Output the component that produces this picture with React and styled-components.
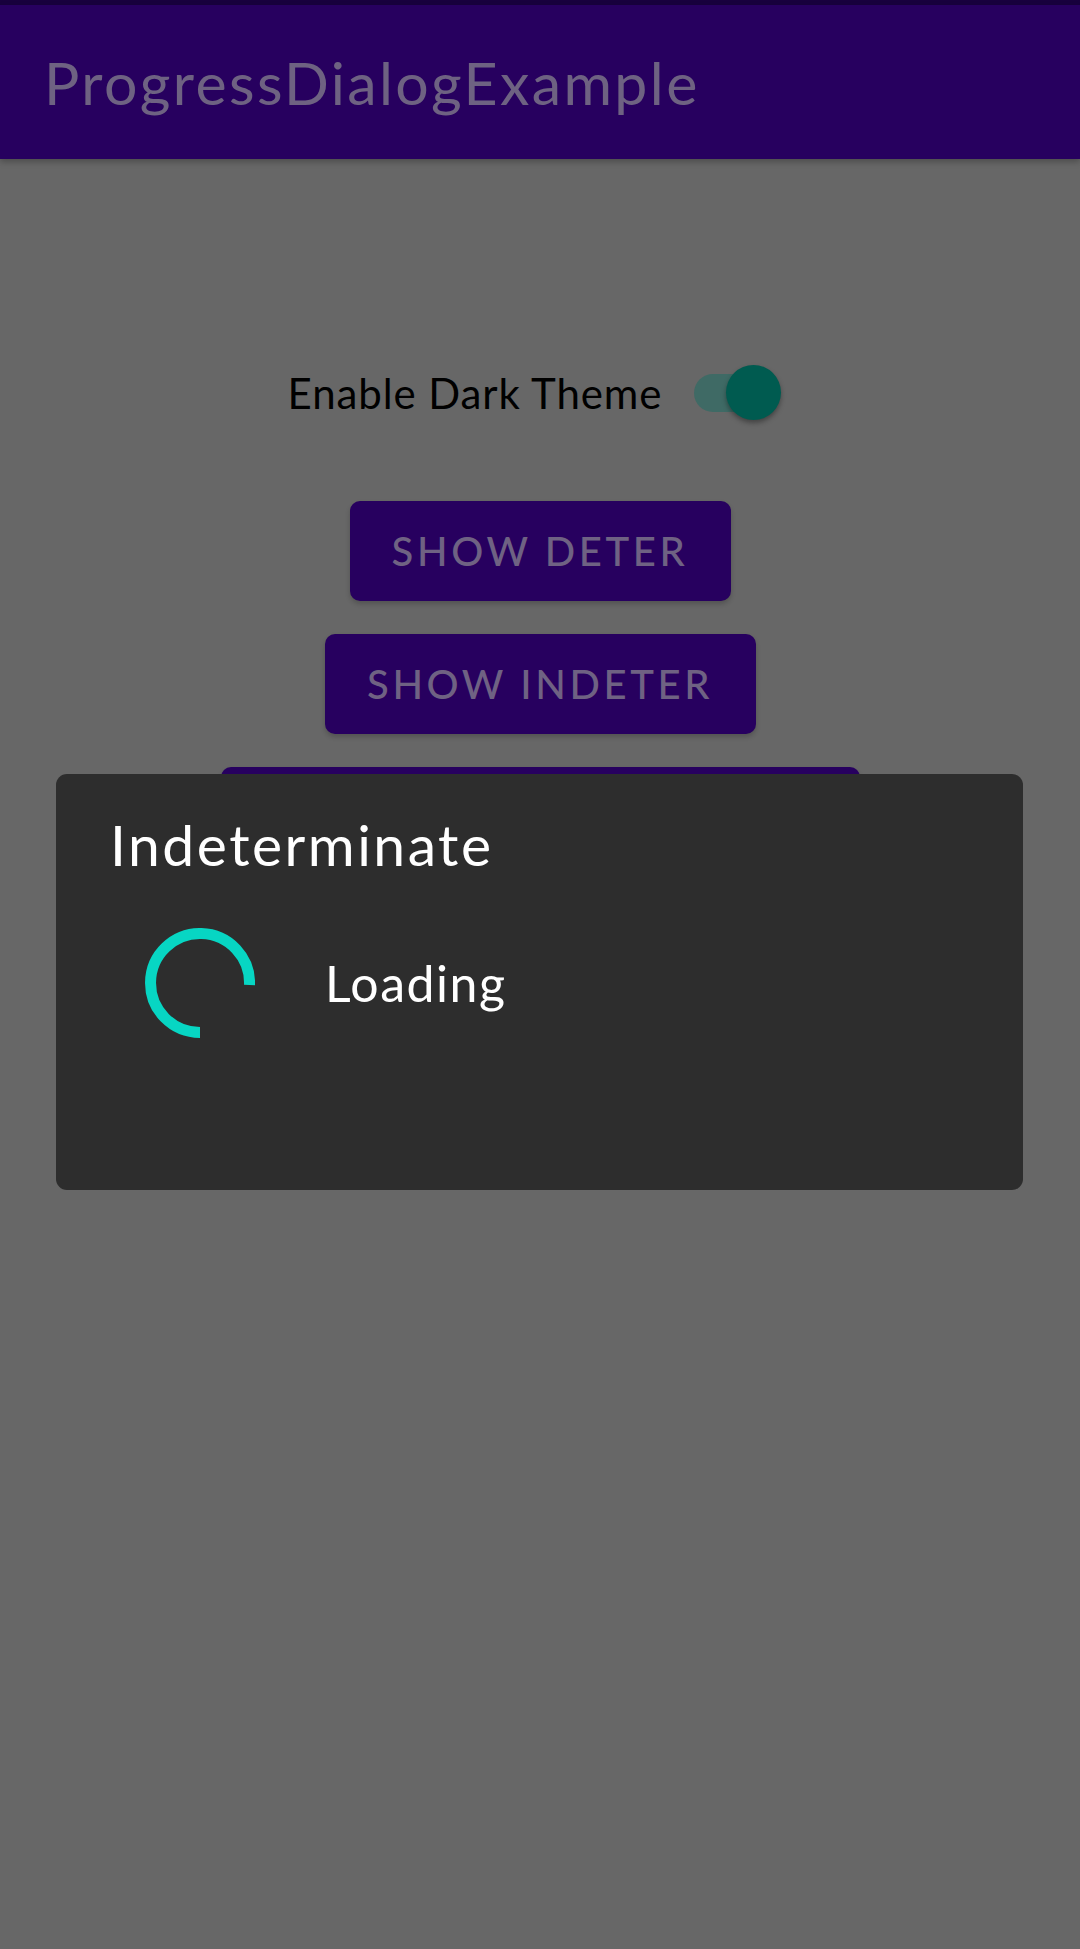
import React from 'react';
import styled, { createGlobalStyle } from 'styled-components';

const GlobalStyle = createGlobalStyle`
  html, body {
    margin: 0;
    padding: 0;
    background: #676767;
    font-family: Lato, "Open Sans", sans-serif;
  }
`;

const Screen = styled.div`
  position: relative;
  width: 1080px;
  min-height: 1949px;
  background: #676767;
  overflow: hidden;
`;

const StatusStrip = styled.div`
  height: 5px;
  background: #18003d;
`;

const AppBar = styled.header`
  height: 154px;
  background: #27005f;
  display: flex;
  align-items: center;
  padding: 0 0 0 44px;
  box-shadow: 0 3px 6px rgba(0, 0, 0, 0.25);
`;

const AppTitle = styled.h1`
  margin: 0;
  font-size: 59px;
  font-weight: 400;
  color: #6e6282;
  letter-spacing: 2.4px;
`;

const Content = styled.main`
  display: flex;
  flex-direction: column;
  align-items: center;
  padding-top: 209px;
`;

const SwitchRow = styled.div`
  display: flex;
  align-items: center;
  gap: 32px;
  margin-left: -20px;
  margin-bottom: 83px;
`;

const SwitchLabel = styled.span`
  font-size: 42px;
  letter-spacing: 0.9px;
  color: #000;
`;

const Track = styled.div`
  position: relative;
  width: 78px;
  height: 38px;
  border-radius: 19px;
  background: #3f6a65;
`;

const Thumb = styled.div`
  position: absolute;
  top: -9px;
  right: -9px;
  width: 55px;
  height: 55px;
  border-radius: 50%;
  background: #005b50;
  box-shadow: 0 3px 5px rgba(0, 0, 0, 0.35);
`;

const Buttons = styled.div`
  display: flex;
  flex-direction: column;
  align-items: center;
  gap: 33px;
`;

const Button = styled.button`
  height: 100px;
  width: ${(p) => p.$w}px;
  border: none;
  border-radius: 10px;
  background: #27005f;
  color: #6f6283;
  font-family: Lato, "Open Sans", sans-serif;
  font-size: 40px;
  font-weight: 500;
  letter-spacing: 3.6px;
  text-transform: uppercase;
  box-shadow: 0 3px 5px rgba(0, 0, 0, 0.2);
`;

const Dialog = styled.div`
  position: absolute;
  left: 56px;
  top: 774px;
  width: 967px;
  height: 416px;
  box-sizing: border-box;
  border-radius: 11px;
  background: #2d2d2d;
  padding: 36px 0 0 54px;
  color: #fff;
`;

const DialogTitle = styled.h2`
  margin: 0;
  font-size: 57px;
  font-weight: 400;
  letter-spacing: 2.5px;
  line-height: 68px;
`;

const DialogBody = styled.div`
  display: flex;
  align-items: center;
  gap: 70px;
  margin-top: 50px;
  padding-left: 35px;
`;

const Message = styled.span`
  font-size: 50px;
  letter-spacing: 1.5px;
`;

const Spinner = () => (
  <svg width="110" height="110" viewBox="0 0 110 110">
    <path
      d="M 104.5 57 A 49.5 49.5 0 1 0 55 104.5"
      fill="none"
      stroke="#07d6c3"
      strokeWidth="11"
    />
  </svg>
);

export default function App() {
  return (
    <Screen>
      <GlobalStyle />
      <StatusStrip />
      <AppBar>
        <AppTitle>ProgressDialogExample</AppTitle>
      </AppBar>
      <Content>
        <SwitchRow>
          <SwitchLabel>Enable Dark Theme</SwitchLabel>
          <Track>
            <Thumb />
          </Track>
        </SwitchRow>
        <Buttons>
          <Button $w={381}>Show Deter</Button>
          <Button $w={431}>Show Indeter</Button>
          <Button $w={639} aria-label="Show custom" />
        </Buttons>
      </Content>
      <Dialog>
        <DialogTitle>Indeterminate</DialogTitle>
        <DialogBody>
          <Spinner />
          <Message>Loading</Message>
        </DialogBody>
      </Dialog>
    </Screen>
  );
}
